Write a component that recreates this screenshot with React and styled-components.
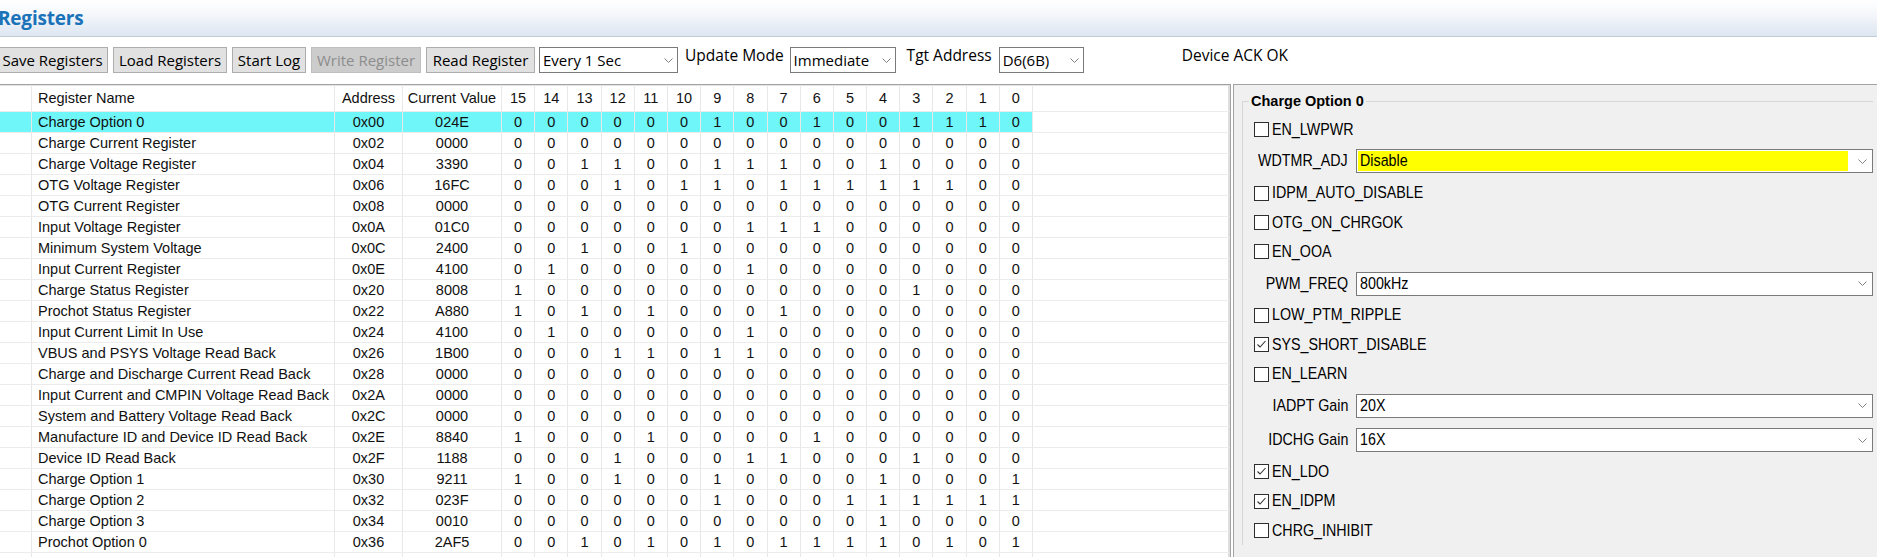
import React from 'react';
import styled, { createGlobalStyle } from 'styled-components';

const GlobalStyle = createGlobalStyle`
  html, body {
    margin: 0;
    padding: 0;
    background: #ffffff;
  }
  body {
    width: 1877px;
    height: 557px;
    overflow: hidden;
    font-family: "Liberation Sans", Arial, sans-serif;
    color: #000;
  }
  * { box-sizing: border-box; }
`

const Window = styled.div`
  width: 1877px;
  height: 557px;
  display: flex;
  flex-direction: column;
  overflow: hidden;
  background: #ffffff;
`

const TitleBar = styled.div`
  flex: none;
  height: 37px;
  display: flex;
  align-items: center;
  background: linear-gradient(#ffffff 0%, #f6f8fb 35%, #dde6f1 100%);
  border-bottom: 1px solid #c3cbd5;
`

const Title = styled.h1`
  margin: 0 0 0 -2px;
  font: bold 19px "Open Sans", sans-serif;
  color: #1a72b9;
  letter-spacing: -0.2px;
`

const Toolbar = styled.div`
  flex: none;
  height: 47px;
  display: flex;
  align-items: flex-start;
  gap: 5px;
  padding-top: 10px;
  margin-left: -3px;
  font: 15px "Open Sans", sans-serif;
`

const Button = styled.button`
  width: ${p => p.$w}px;
  height: 26px;
  padding: 0;
  border: 1px solid ${p => (p.disabled ? '#bfbfbf' : '#adadad')};
  background: ${p => (p.disabled ? '#cccccc' : '#e1e1e1')};
  color: ${p => (p.disabled ? '#8d8d8d' : '#000')};
  font: inherit;
  white-space: nowrap;
`

const DropDown = styled.div`
  width: ${p => p.$w}px;
  height: 26px;
  margin-left: ${p => p.$ml || 0}px;
  display: flex;
  align-items: center;
  justify-content: space-between;
  padding: 0 4px 0 3px;
  border: 1px solid #7a7a7a;
  background: #ffffff;
  white-space: nowrap;
`

const ToolLabel = styled.span`
  margin-left: ${p => p.$ml || 0}px;
  margin-top: -1px;
  line-height: 18px;
  font-size: 15.5px;
  white-space: nowrap;
`

const Main = styled.div`
  flex: 1;
  display: flex;
  min-height: 0;
`

const GridPane = styled.div`
  flex: none;
  width: 1231px;
  border-top: 1px solid #a3a3a3;
  border-right: 1px solid #a3a3a3;
  box-shadow: inset -2px 0 0 #dedede, inset 0 1px 0 #e3e3e3;
  overflow: hidden;
  font-size: 14.5px;
`

const columns = '32px 303px 68px 99px repeat(16, 33.2px) 1fr'

const GridRow = styled.div`
  display: grid;
  grid-template-columns: ${columns};
  height: ${p => (p.$head ? 27 : 21)}px;
`

const Cell = styled.div`
  display: flex;
  align-items: center;
  justify-content: ${p => (p.$left ? 'flex-start' : 'center')};
  padding-left: ${p => (p.$left ? 6 : 0)}px;
  border-right: 1px solid ${p => (p.$fill ? 'transparent' : '#e8e8e8')};
  border-bottom: 1px solid #ececec;
  background: ${p => (p.$hl ? '#6ef6f9' : 'transparent')};
  white-space: nowrap;
  overflow: hidden;
  color: #111;
`

const Panel = styled.div`
  flex: 1;
  margin-left: 2px;
  border-top: 1px solid #a3a3a3;
  border-left: 1px solid #a3a3a3;
  background: #f0f0f0;
  padding: 8px 4px 0 8px;
  font-size: 14.5px;
  overflow: hidden;
`

const Group = styled.fieldset`
  margin: 0;
  padding: 5px 0 0 11px;
  border: 1px solid #d6d6d6;
  border-right: none;
  border-bottom: none;
  min-width: 0;
`

const Legend = styled.legend`
  margin-left: -5px;
  padding: 0 2px;
  font-weight: bold;
  line-height: 17px;
`

/* the dialog's labels use a narrow face: a tall font squeezed sideways */
const NarrowText = styled.span`
  display: inline-block;
  font-size: 17px;
  line-height: 20px;
  white-space: nowrap;
  transform: scaleX(0.84);
  transform-origin: ${p => (p.$right ? 'right' : 'left')} center;
`

const CheckRow = styled.div`
  height: 29.3px;
  display: flex;
  align-items: center;
  gap: 3px;
`

const Box = styled.span`
  width: 15px;
  height: 15px;
  flex: none;
  display: flex;
  align-items: center;
  justify-content: center;
  border: 1px solid #2e2e2e;
  background: #ffffff;
`

const SelectRow = styled.div`
  height: 34.3px;
  display: flex;
  align-items: center;
  gap: 8px;
`

const FieldLabel = styled.span`
  width: 94px;
  flex: none;
  display: flex;
  justify-content: flex-end;
`

const FieldSelect = styled.div`
  flex: 1;
  height: 24px;
  display: flex;
  align-items: center;
  border: 1px solid #7a7a7a;
  background: #ffffff;
  padding-right: 5px;
`

const FieldValue = styled.span`
  flex: 1;
  align-self: stretch;
  display: flex;
  align-items: center;
  margin: 1px 10px 1px 1px;
  padding-left: 2px;
  background: ${p => (p.$hl ? '#ffff00' : 'transparent')};
`

const Chevron = () => (
  <svg width="9" height="5" viewBox="0 0 9 5">
    <polyline points="0.5,0.5 4.5,4.5 8.5,0.5" fill="none" stroke="#808080" strokeWidth="1" />
  </svg>
)

const Tick = () => (
  <svg width="13" height="13" viewBox="0 0 13 13">
    <polyline points="2.5,6.5 5,9 10.5,3" fill="none" stroke="#333" strokeWidth="1.1" />
  </svg>
)

const registers = [
  ['Charge Option 0', '0x00', '024E'],
  ['Charge Current Register', '0x02', '0000'],
  ['Charge Voltage Register', '0x04', '3390'],
  ['OTG Voltage Register', '0x06', '16FC'],
  ['OTG Current Register', '0x08', '0000'],
  ['Input Voltage Register', '0x0A', '01C0'],
  ['Minimum System Voltage', '0x0C', '2400'],
  ['Input Current Register', '0x0E', '4100'],
  ['Charge Status Register', '0x20', '8008'],
  ['Prochot Status Register', '0x22', 'A880'],
  ['Input Current Limit In Use', '0x24', '4100'],
  ['VBUS and PSYS Voltage Read Back', '0x26', '1B00'],
  ['Charge and Discharge Current Read Back', '0x28', '0000'],
  ['Input Current and CMPIN Voltage Read Back', '0x2A', '0000'],
  ['System and Battery Voltage Read Back', '0x2C', '0000'],
  ['Manufacture ID and Device ID Read Back', '0x2E', '8840'],
  ['Device ID Read Back', '0x2F', '1188'],
  ['Charge Option 1', '0x30', '9211'],
  ['Charge Option 2', '0x32', '023F'],
  ['Charge Option 3', '0x34', '0010'],
  ['Prochot Option 0', '0x36', '2AF5'],
]

const options = [
  { type: 'check', label: 'EN_LWPWR' },
  { type: 'select', label: 'WDTMR_ADJ', value: 'Disable', hl: true },
  { type: 'check', label: 'IDPM_AUTO_DISABLE' },
  { type: 'check', label: 'OTG_ON_CHRGOK' },
  { type: 'check', label: 'EN_OOA' },
  { type: 'select', label: 'PWM_FREQ', value: '800kHz' },
  { type: 'check', label: 'LOW_PTM_RIPPLE' },
  { type: 'check', label: 'SYS_SHORT_DISABLE', checked: true },
  { type: 'check', label: 'EN_LEARN' },
  { type: 'select', label: 'IADPT Gain', value: '20X' },
  { type: 'select', label: 'IDCHG Gain', value: '16X' },
  { type: 'check', label: 'EN_LDO', checked: true },
  { type: 'check', label: 'EN_IDPM', checked: true },
  { type: 'check', label: 'CHRG_INHIBIT' },
]

const bitNumbers = Array.from({ length: 16 }, (_, i) => 15 - i)

const bitsOf = hex => {
  const v = parseInt(hex, 16)
  return bitNumbers.map(b => (v >> b) & 1)
}

function RegisterGrid() {
  return (
    <GridPane>
      <GridRow $head>
        <Cell />
        <Cell $left>Register Name</Cell>
        <Cell>Address</Cell>
        <Cell>Current Value</Cell>
        {bitNumbers.map(b => <Cell key={b}>{b}</Cell>)}
        <Cell $fill />
      </GridRow>
      {registers.map(([name, addr, value], i) => {
        const hl = i === 0
        return (
          <GridRow key={addr}>
            <Cell $hl={hl} />
            <Cell $left $hl={hl}>{name}</Cell>
            <Cell $hl={hl}>{addr}</Cell>
            <Cell $hl={hl}>{value}</Cell>
            {bitsOf(value).map((bit, j) => <Cell key={j} $hl={hl}>{bit}</Cell>)}
            <Cell $fill />
          </GridRow>
        )
      })}
      <GridRow>
        <Cell />
        <Cell />
        <Cell />
        <Cell />
        {bitNumbers.map(b => <Cell key={b} />)}
        <Cell $fill />
      </GridRow>
    </GridPane>
  )
}

function OptionPanel() {
  return (
    <Panel>
      <Group>
        <Legend>Charge Option 0</Legend>
        {options.map(o =>
          o.type === 'check' ? (
            <CheckRow key={o.label}>
              <Box>{o.checked && <Tick />}</Box>
              <NarrowText>{o.label}</NarrowText>
            </CheckRow>
          ) : (
            <SelectRow key={o.label}>
              <FieldLabel>
                <NarrowText $right>{o.label}</NarrowText>
              </FieldLabel>
              <FieldSelect>
                <FieldValue $hl={o.hl}>
                  <NarrowText>{o.value}</NarrowText>
                </FieldValue>
                <Chevron />
              </FieldSelect>
            </SelectRow>
          )
        )}
      </Group>
    </Panel>
  )
}

export default function App() {
  return (
    <Window>
      <GlobalStyle />
      <TitleBar>
        <Title>Registers</Title>
      </TitleBar>
      <Toolbar>
        <Button $w={111}>Save Registers</Button>
        <Button $w={114}>Load Registers</Button>
        <Button $w={74}>Start Log</Button>
        <Button $w={110} disabled>Write Register</Button>
        <Button $w={109}>Read Register</Button>
        <DropDown $w={139} $ml={-1}>Every 1 Sec<Chevron /></DropDown>
        <ToolLabel $ml={2}>Update Mode</ToolLabel>
        <DropDown $w={106} $ml={1}>Immediate<Chevron /></DropDown>
        <ToolLabel $ml={6}>Tgt Address</ToolLabel>
        <DropDown $w={85} $ml={2}>D6(6B)<Chevron /></DropDown>
        <ToolLabel $ml={93}>Device ACK OK</ToolLabel>
      </Toolbar>
      <Main>
        <RegisterGrid />
        <OptionPanel />
      </Main>
    </Window>
  )
}
